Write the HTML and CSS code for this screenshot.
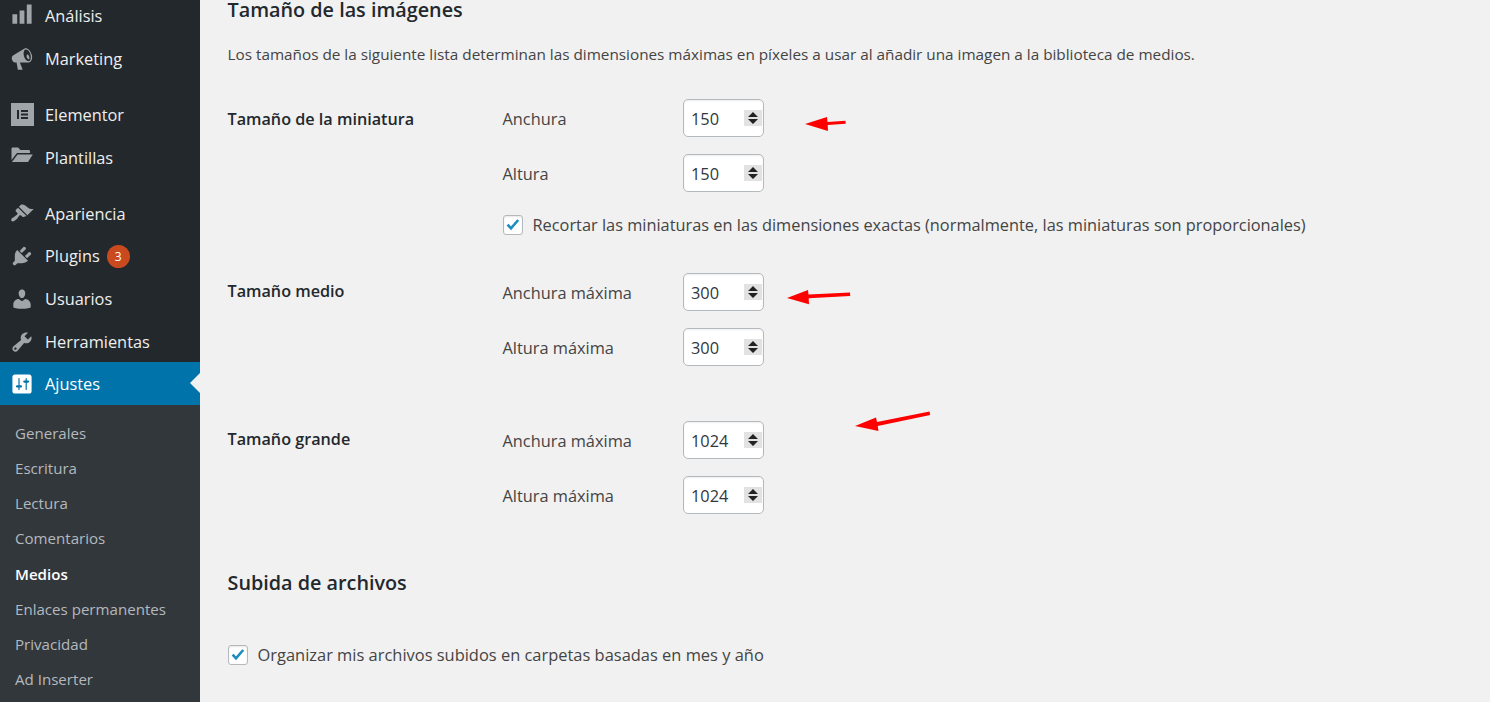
FILE: index.html
```html
<!DOCTYPE html>
<html lang="es">

<head>
    <meta charset="UTF-8">
    <meta name="viewport" content="width=device-width, initial-scale=1.0">
    <title>Ajustes de medios</title>
    <link rel="stylesheet" href="styles.css">
</head>

<body>
    <div class="sidebar">
        <ul class="menu">
            <li class="menu-item first">
                <svg class="menu-icon" viewBox="0 0 20 20"><path transform="translate(0 -1.5)" d="M18 18V2h-4v16h4zm-6 0V7H8v11h4zm-6 0v-8H2v8h4z"/></svg>
                Análisis
            </li>
            <li class="menu-item first">
                <svg class="menu-icon" viewBox="0 0 20 20"><path d="M18.15 5.94c.46 1.62.38 3.22-.02 4.48-.42 1.28-1.26 2.18-2.3 2.48-.16.06-.26.06-.4.06-.06.02-.12.02-.18.02-.06.02-.14.02-.22.02h-6.8l2.22 5.5c.02.14-.06.26-.14.34-.08.1-.24.16-.34.16H6.95c-.1 0-.26-.06-.34-.16-.08-.08-.16-.2-.14-.34l-1-5.5H4.25l-.02-.02c-.5.06-1.08-.18-1.54-.62s-.88-1.08-1.06-1.88c-.24-.8-.2-1.56-.02-2.2.18-.62.58-1.08 1.16-1.3l.02-.02 9-5.4c.1-.06.18-.1.24-.16.06-.04.14-.08.24-.12.14-.08.24-.12.34-.14 1.06-.28 2.24.22 3.18 1.18.98.98 1.72 2.4 2.18 4.02zm-2.36 5.82c.66-.18 1.14-.82 1.4-1.84.26-1 .22-2.3-.16-3.66-.38-1.38-1.06-2.52-1.86-3.28-.76-.76-1.66-1.08-2.3-.9-.66.2-1.14.84-1.4 1.84-.26 1.02-.22 2.32.16 3.68.38 1.38 1.06 2.52 1.82 3.28.8.76 1.7 1.1 2.34.88zm-.62-5.3c.5.5.8 1.2 1 2 .2.7.1 1.5-.2 1.8-.5.2-1.2-.2-1.7-1.1-.4-.8-.6-1.9-.3-2.5.2-.4.7-.6 1.2-.2z"/></svg>
                Marketing
            </li>
            <li class="menu-sep"></li>
            <li class="menu-item">
                <svg class="menu-icon" viewBox="0 0 24 24"><path fill-rule="evenodd" d="M1 0h23v23H1zM7 7v9h2V7zm4 0v2h7V7zm0 3.500v2h7v-2zm0 3.500v2h7v-2z"/></svg>
                Elementor
            </li>
            <li class="menu-item">
                <svg class="menu-icon" viewBox="0 0 24 24"><g transform="translate(0 -3)"><path d="M1.500 6c0-.8.6-1.400 1.400-1.400h5.200L10.400 7h8.200c.8 0 1.400.6 1.400 1.400V10H7L1.500 17z"/><path d="M7.600 11.400h15.200L18 19H1.900z"/></g></svg>
                Plantillas
            </li>
            <li class="menu-sep"></li>
            <li class="menu-item">
                <svg class="menu-icon" viewBox="0 0 20 20"><path d="M14.48 11.06L7.41 3.99l1.5-1.5c.5-.56 2.3-.47 3.51.32 1.21.8 1.43 1.28 2.91 2.1 1.18.64 2.45 1.26 4.45.85zm-.71.71L6.7 4.7 4.93 6.47c-.39.39-.39 1.02 0 1.41l1.06 1.06c.39.39.39 1.03 0 1.42-.6.6-1.43 1.11-2.21 1.69-.35.26-.7.53-1.01.84C1.43 13.23.4 14.85 1.4 15.85c.99 1 2.62-.03 3.97-1.38.31-.31.58-.66.84-1.01.58-.78 1.09-1.61 1.69-2.21.39-.39 1.02-.39 1.41 0l1.06 1.06c.39.39 1.02.39 1.41 0z"/></svg>
                Apariencia
            </li>
            <li class="menu-item">
                <svg class="menu-icon" viewBox="0 0 20 20"><path d="M13.11 4.36L9.87 7.6 8 5.73l3.24-3.24c.35-.34 1.05-.2 1.56.32.52.51.66 1.21.31 1.55zm-8 1.77l.91-1.12 9.01 9.01-1.19.84c-.71.71-2.63 1.16-3.82 1.16H6.14L4.9 17.26c-.59.59-1.54.59-2.12 0-.59-.58-.59-1.53 0-2.12l1.24-1.24v-3.88c0-1.13.4-3.19 1.09-3.89zm7.26 3.97l3.24-3.24c.34-.35 1.04-.21 1.55.31.52.51.66 1.21.31 1.55l-3.24 3.25z"/></svg>
                Plugins <span class="badge">3</span>
            </li>
            <li class="menu-item">
                <svg class="menu-icon" viewBox="0 0 20 20"><path d="M10 9.25c-2.27 0-2.73-3.44-2.73-3.44C7 4.02 7.82 2 9.97 2c2.16 0 2.98 2.02 2.71 3.81 0 0-.41 3.44-2.68 3.44zm0 2.57L12.72 10c2.39 0 4.52 2.33 4.52 4.53v2.49s-3.65 1.13-7.24 1.13c-3.65 0-7.24-1.13-7.24-1.13v-2.49c0-2.25 1.94-4.48 4.47-4.48z"/></svg>
                Usuarios
            </li>
            <li class="menu-item">
                <svg class="menu-icon" viewBox="0 0 20 20"><path d="M16.68 9.77c-1.34 1.34-3.3 1.67-4.95.99l-5.41 6.52c-.99.99-2.59.99-3.58 0s-.99-2.59 0-3.57l6.52-5.42c-.68-1.65-.35-3.61.99-4.95 1.28-1.28 3.12-1.62 4.72-1.06l-2.89 2.89 2.82 2.82 2.86-2.87c.53 1.58.18 3.39-1.08 4.65zM3.81 16.21c.4.39 1.04.39 1.43 0 .4-.4.4-1.04 0-1.43-.39-.4-1.03-.4-1.43 0-.39.39-.39 1.03 0 1.43z"/></svg>
                Herramientas
            </li>
            <li class="menu-item current">
                <svg class="menu-icon" viewBox="0 0 20 20"><path d="M18 16V4c0-1.1-.9-2-2-2H4c-1.1 0-2 .9-2 2v12c0 1.1.9 2 2 2h12c1.1 0 2-.9 2-2zM8 11h1c.55 0 1 .45 1 1s-.45 1-1 1H8v1.5c0 .28-.22.5-.5.5s-.5-.22-.5-.5V13H6c-.55 0-1-.45-1-1s.45-1 1-1h1V5.500c0-.28.22-.5.5-.5s.5.22.5.5V11zm5-2h-1c-.55 0-1-.45-1-1s.45-1 1-1h1V5.500c0-.28.22-.5.5-.5s.5.22.5.5V7h1c.55 0 1 .45 1 1s-.45 1-1 1h-1v5.500c0 .28-.22.5-.5.5s-.5-.22-.5-.5V9z"/></svg>
                Ajustes
            </li>
        </ul>
        <ul class="submenu">
            <li>Generales</li>
            <li>Escritura</li>
            <li>Lectura</li>
            <li>Comentarios</li>
            <li class="active">Medios</li>
            <li>Enlaces permanentes</li>
            <li>Privacidad</li>
            <li>Ad Inserter</li>
        </ul>
    </div>

    <div class="content">
        <h2 class="first-title">Tamaño de las imágenes</h2>
        <p class="intro">Los tamaños de la siguiente lista determinan las dimensiones máximas en píxeles a usar al añadir una imagen a la biblioteca de medios.</p>

        <div class="size-group thumb">
            <h3>Tamaño de la miniatura</h3>
            <div class="fields">
                <div class="field">
                    <label>Anchura</label>
                    <div class="num"><input type="text" value="150"><svg class="spin" viewBox="0 0 18 16"><path d="M9 2l5 5H4zM9 14l-5-5h10z"/></svg></div>
                </div>
                <div class="field">
                    <label>Altura</label>
                    <div class="num"><input type="text" value="150"><svg class="spin" viewBox="0 0 18 16"><path d="M9 2l5 5H4zM9 14l-5-5h10z"/></svg></div>
                </div>
                <div class="check-row crop-row">
                    <span class="checkbox"><svg viewBox="0 0 18 18"><polyline points="3.600,8.600 7,12.400 14.200,4"/></svg></span>
                    Recortar las miniaturas en las dimensiones exactas (normalmente, las miniaturas son proporcionales)
                </div>
            </div>
        </div>

        <div class="size-group medium">
            <h3>Tamaño medio</h3>
            <div class="fields">
                <div class="field">
                    <label>Anchura máxima</label>
                    <div class="num"><input type="text" value="300"><svg class="spin" viewBox="0 0 18 16"><path d="M9 2l5 5H4zM9 14l-5-5h10z"/></svg></div>
                </div>
                <div class="field">
                    <label>Altura máxima</label>
                    <div class="num"><input type="text" value="300"><svg class="spin" viewBox="0 0 18 16"><path d="M9 2l5 5H4zM9 14l-5-5h10z"/></svg></div>
                </div>
            </div>
        </div>

        <div class="size-group large">
            <h3>Tamaño grande</h3>
            <div class="fields">
                <div class="field">
                    <label>Anchura máxima</label>
                    <div class="num"><input type="text" value="1024"><svg class="spin" viewBox="0 0 18 16"><path d="M9 2l5 5H4zM9 14l-5-5h10z"/></svg></div>
                </div>
                <div class="field">
                    <label>Altura máxima</label>
                    <div class="num"><input type="text" value="1024"><svg class="spin" viewBox="0 0 18 16"><path d="M9 2l5 5H4zM9 14l-5-5h10z"/></svg></div>
                </div>
            </div>
        </div>

        <h2 class="upload-title">Subida de archivos</h2>
        <div class="check-row upload-row">
            <span class="checkbox"><svg viewBox="0 0 18 18"><polyline points="3.600,8.600 7,12.400 14.200,4"/></svg></span>
            Organizar mis archivos subidos en carpetas basadas en mes y año
        </div>
    </div>

    <!-- red arrows drawn on top of the screenshot -->
    <svg class="arrows" viewBox="0 0 1490 702">
        <path d="M805 124l22-7 .5 5 18-1.2.2 3-18 1.3.3 6z"/>
        <path d="M787 298l21-8 .5 4.500 41.500-2 .2 3.500-41.500 2.200.3 6z"/>
        <path d="M855 426l21-8.500 1 4.500 52.500-10.500.7 3.500-52.500 11 .8 5z"/>
    </svg>
</body>
</html>
```

FILE: styles.css
```css
* {
    box-sizing: border-box;
}

html,
body {
    height: 702px;
    overflow: hidden;
}

body {
    display: flex;
    margin: 0;
    background-color: #f1f1f1;
    color: #444;
    font-family: "Open Sans", "Noto Sans", sans-serif;
    font-size: 16.35px;
}

ul {
    margin: 0;
    padding: 0;
    list-style: none;
}

.sidebar {
    flex: 0 0 200px;
    height: 702px;
    background-color: #23282d;
    overflow: hidden;
}

.menu {
    margin-top: -5.5px;
}

.menu-item {
    position: relative;
    display: flex;
    align-items: center;
    height: 42.7px;
    padding-top: 2px;
    padding-left: 10px;
    color: #eee;
}

.menu-item.first {
    padding-top: 0;
}

.menu-sep {
    height: 13px;
}

.menu-icon {
    width: 24px;
    height: 24px;
    margin-right: 11px;
    fill: #a0a5aa;
}

.badge {
    display: flex;
    align-items: center;
    justify-content: center;
    width: 23px;
    height: 23px;
    margin-left: 7px;
    border-radius: 50%;
    background-color: #ca4a1f;
    color: #fff;
    font-size: 12px;
}

.current {
    background-color: #0073aa;
    color: #fff;
}

.current .menu-icon {
    fill: #fff;
}

/* little notch pointing at the content */
.current::after {
    content: "";
    position: absolute;
    top: 50%;
    right: 0;
    margin-top: -10px;
    border: 10px solid transparent;
    border-left-width: 0;
    border-right-color: #f1f1f1;
}

.submenu {
    height: 300px;
    padding-top: 10.5px;
    background-color: #32373c;
    font-size: 15.1px;
}

.submenu li {
    display: flex;
    align-items: center;
    height: 35.2px;
    padding-left: 15px;
    color: #b4b9be;
}

.submenu .active {
    color: #fff;
    font-weight: 600;
}

.content {
    flex: 1;
    padding-left: 27.5px;
}

h2 {
    margin: 0;
    color: #23282d;
    font-size: 19.8px;
    font-weight: 600;
    line-height: 24px;
}

.first-title {
    height: 18px;
    margin-top: 1px;
    line-height: 18px;
}

.intro {
    margin: 25px 0 0;
    font-size: 15.3px;
    line-height: 20px;
}

.size-group {
    display: flex;
    margin-top: 35px;
}

.size-group.medium {
    margin-top: 38px;
}

.size-group.large {
    margin-top: 55px;
}

h3 {
    flex: 0 0 275px;
    margin: 0;
    padding-top: 8px;
    color: #23282d;
    font-size: 16.2px;
    font-weight: 600;
    line-height: 20px;
}

.thumb h3 {
    padding-top: 10px;
}

.fields {
    display: flex;
    flex-direction: column;
    gap: 17px;
}

.field {
    display: flex;
    align-items: center;
}

.field label {
    width: 180px;
    padding-top: 2px;
}

.num {
    display: flex;
    align-items: center;
    width: 81px;
    height: 38px;
    padding-left: 7.5px;
    border: 1px solid #b4b9be;
    border-radius: 5px;
    background-color: #fff;
    box-shadow: inset 0 1px 2px rgba(0, 0, 0, 0.07);
}

.num input {
    width: 52.5px;
    padding: 2px 0 0;
    border: none;
    outline: none;
    background: none;
    color: #32373c;
    font: inherit;
}

.spin {
    width: 18px;
    height: 16px;
    background-color: #e2e2e2;
    fill: #222;
}

.check-row {
    display: flex;
    align-items: center;
    line-height: 20px;
}

.crop-row {
    margin-top: 6px;
}

.upload-row {
    margin-top: 50px;
    font-size: 16.45px;
}

.checkbox {
    width: 20px;
    height: 20px;
    margin-right: 10px;
    border: 1px solid #b4b9be;
    border-radius: 3px;
    background-color: #fff;
    box-shadow: inset 0 1px 2px rgba(0, 0, 0, 0.1);
}

.checkbox svg {
    display: block;
    width: 18px;
    height: 18px;
    fill: none;
    stroke: #1e8cbe;
    stroke-width: 2.6;
}

.upload-title {
    margin-top: 57px;
}

.arrows {
    position: absolute;
    top: 0;
    left: 0;
    width: 1490px;
    height: 702px;
    fill: #f00;
    pointer-events: none;
}
```
